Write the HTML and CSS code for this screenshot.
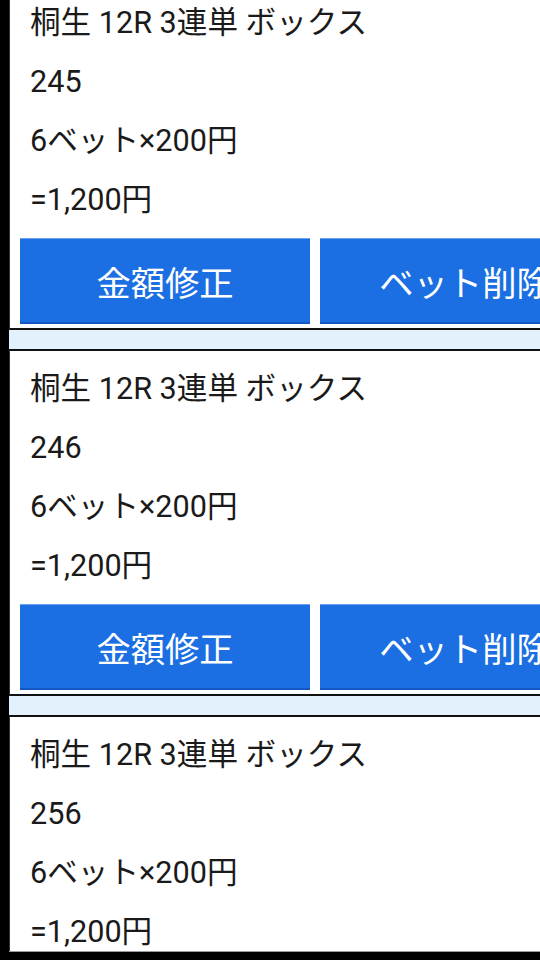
FILE: index.html
```html
<!DOCTYPE html>
<html lang="ja">
<head>
<meta charset="utf-8">
<title>Bets</title>
<link rel="stylesheet" href="styles.css">
</head>
<body>
<div class="viewport">
  <div class="list">
    <div class="card">
      <p class="row">桐生 12R 3連単 ボックス</p>
      <p class="row">245</p>
      <p class="row">6ベット×200円</p>
      <p class="row">=1,200円</p>
      <div class="actions">
        <button class="btn">金額修正</button>
        <button class="btn">ベット削除</button>
      </div>
    </div>
    <div class="sep"></div>
    <div class="card">
      <p class="row">桐生 12R 3連単 ボックス</p>
      <p class="row">246</p>
      <p class="row">6ベット×200円</p>
      <p class="row">=1,200円</p>
      <div class="actions">
        <button class="btn">金額修正</button>
        <button class="btn">ベット削除</button>
      </div>
    </div>
    <div class="sep"></div>
    <div class="card">
      <p class="row">桐生 12R 3連単 ボックス</p>
      <p class="row">256</p>
      <p class="row">6ベット×200円</p>
      <p class="row">=1,200円</p>
    </div>
  </div>
</div>
</body>
</html>
```
FILE: styles.css
```css
html, body {
  margin: 0;
  padding: 0;
  background: #000;
  overflow: hidden;
}
body {
  font-family: Roboto, "Noto Sans CJK JP", sans-serif;
  color: #1a1a1a;
}
.viewport {
  height: 951px;
  overflow: hidden;
  margin-left: 9px;
  background: #fff;
  border-bottom: 1px solid #9a9a9a;
}
.list {
  width: 640px;
  margin-top: -17px;
}
.card {
  background: #fff;
  border-top: 2px solid #111;
  border-bottom: 2px solid #111;
  border-left: 1px solid #333;
  padding: 8px 0 4px 0;
}
.row {
  margin: 0;
  padding-left: 20px;
  font-size: 30.6px;
  line-height: 59px;
  height: 59px;
  white-space: nowrap;
}
.actions {
  display: flex;
  gap: 10px;
  margin-top: 9px;
  padding-left: 10px;
}
.btn {
  flex: 0 0 290px;
  height: 86px;
  background: #1b6fe3;
  color: #fff;
  border: 0;
  border-top: 1px solid #6a9ff0;
  border-bottom: 2px solid #1456c2;
  font-family: Roboto, "Noto Sans CJK JP", sans-serif;
  font-size: 34.3px;
  padding: 0;
  white-space: nowrap;
  overflow: hidden;
}
.sep {
  height: 19px;
  background: #e3f1fd;
}
```
